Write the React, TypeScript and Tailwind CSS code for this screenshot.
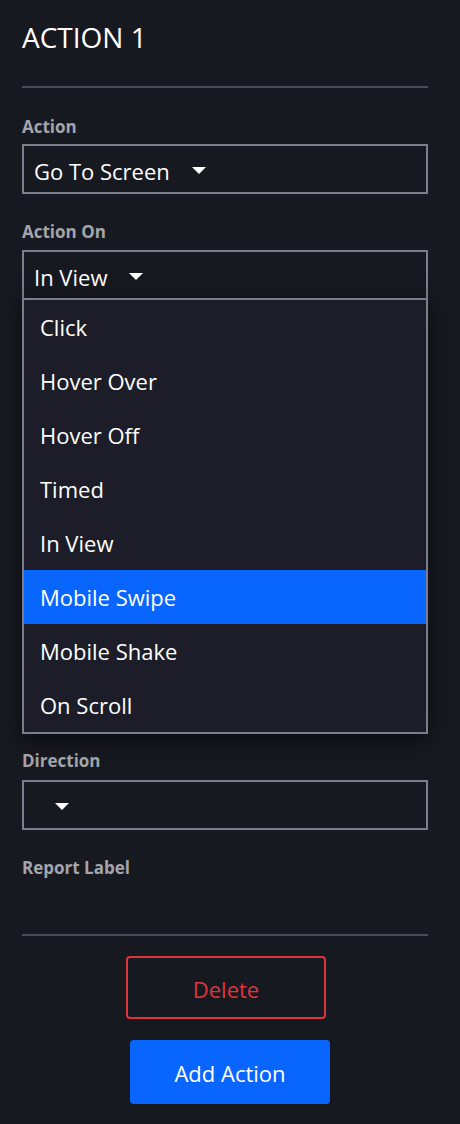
const options = ["Click", "Hover Over", "Hover Off", "Timed", "In View", "Mobile Swipe", "Mobile Shake", "On Scroll"];

const Caret = () => (
  <svg width="14" height="8" viewBox="0 0 14 8" className="shrink-0">
    <path d="M0 0 L14 0 L7 7 Z" fill="#ffffff" />
  </svg>
);

const Label = ({ children, className = "" }: { children: string; className?: string }) => (
  <div className={`text-[17px] leading-[22px] font-bold text-[#a4a5ab] ${className}`}>{children}</div>
);

const App = () => {
  return (
    <div
      className="min-h-[1124px] w-[460px] bg-[#171921] px-[22px] pt-[17px] text-white"
      style={{ fontFamily: '"Open Sans", "Noto Sans", sans-serif' }}
    >
      <h1 className="text-[28px] leading-[40px] font-normal">ACTION 1</h1>
      <div className="mt-[29px] h-[2px] w-[406px] bg-[#4a4d59]" />

      <Label className="mt-[28px]">Action</Label>
      <div className="mt-[6px] flex h-[50px] w-[406px] items-center gap-[22px] border-2 border-[#7b7d8a] px-[10px] pt-[4px]">
        <span className="text-[22px] leading-[30px]">Go To Screen</span>
        <Caret />
      </div>

      <Label className="mt-[27px]">Action On</Label>
      <div className="relative mt-[7px] w-[406px]">
        <div className="flex h-[50px] items-center gap-[22px] border-2 border-[#7b7d8a] px-[10px] pt-[4px]">
          <span className="text-[22px] leading-[30px]">In View</span>
          <Caret />
        </div>
        <ul className="absolute top-[48px] left-0 z-10 w-[406px] border-2 border-[#7b7d8a] bg-[#1c1d28] shadow-[0_6px_20px_rgba(0,0,0,0.55)]">
          {options.map((o) => (
            <li
              key={o}
              className={`flex h-[54px] items-center px-[16px] text-[22px] leading-[30px] ${
                o === "Mobile Swipe" ? "bg-[#0866ff]" : ""
              }`}
            >
              {o}
            </li>
          ))}
        </ul>
      </div>

      <Label className="mt-[450px]">Direction</Label>
      <div className="mt-[8px] flex h-[50px] w-[406px] items-center border-2 border-[#7b7d8a] pl-[31px] pt-[4px]">
        <Caret />
      </div>

      <Label className="mt-[27px]">Report Label</Label>
      <div className="mt-[55px] h-[2px] w-[406px] bg-[#4a4d59]" />

      <button className="mt-[20px] ml-[104px] flex h-[63px] w-[200px] items-center justify-center rounded-[4px] border-2 border-[#e0343b] pt-[2px] text-[22px] leading-[30px] text-[#e0343b]">
        Delete
      </button>
      <button className="mt-[21px] ml-[108px] flex h-[64px] w-[200px] items-center justify-center rounded-[4px] bg-[#0866ff] pt-[1px] text-[22px] leading-[30px] text-white">
        Add Action
      </button>
    </div>
  );
};

export default App;
